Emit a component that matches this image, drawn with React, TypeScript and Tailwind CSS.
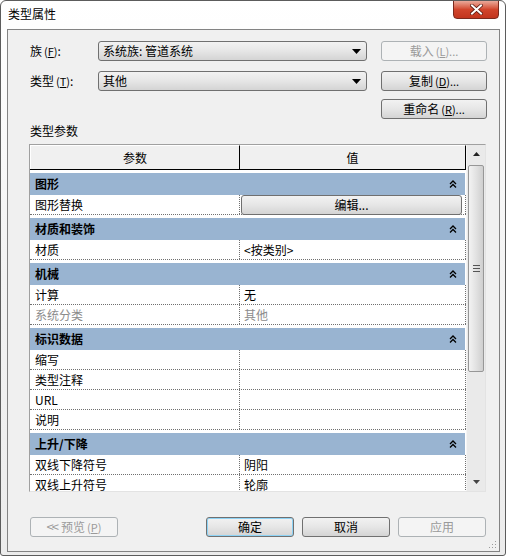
import React from 'react';

interface Row {
  k: string;
  v?: string;
  button?: string;
  muted?: boolean;
}

interface Section {
  title: string;
  rows: Row[];
}

const sections: Section[] = [
  { title: '图形', rows: [{ k: '图形替换', button: '编辑...' }] },
  { title: '材质和装饰', rows: [{ k: '材质', v: '<按类别>' }] },
  {
    title: '机械',
    rows: [
      { k: '计算', v: '无' },
      { k: '系统分类', v: '其他', muted: true },
    ],
  },
  { title: '标识数据', rows: [{ k: '缩写' }, { k: '类型注释' }, { k: 'URL' }, { k: '说明' }] },
  {
    title: '上升/下降',
    rows: [
      { k: '双线下降符号', v: '阴阳' },
      { k: '双线上升符号', v: '轮廓' },
    ],
  },
];

const face =
  'h-[20px] flex items-center rounded-[3px] border border-[#707070] bg-gradient-to-b from-[#f2f2f2] via-[#e6e6e6] to-[#d4d4d4] text-black';
const btn = `${face} justify-center`;
const btnOff =
  'h-[20px] flex items-center justify-center rounded-[3px] border border-[#adb2b5] bg-[#f4f4f4] text-[#9a9a9a]';

const Chevrons = () => (
  <svg width="8" height="8" viewBox="0 0 8 8" className="block">
    <path d="M1 4 L4 1 L7 4" fill="none" stroke="#000" strokeWidth="1.3" />
    <path d="M1 7.5 L4 4.5 L7 7.5" fill="none" stroke="#000" strokeWidth="1.3" />
  </svg>
);

const ComboArrow = () => (
  <svg width="9" height="5" viewBox="0 0 9 5" className="block">
    <path d="M0 0 H9 L4.5 5 Z" fill="#000" />
  </svg>
);

const Combo = ({ text }: { text: string }) => (
  <div className={`${face} w-[269px] justify-between pl-[4px] pr-[5px]`}>
    <span className="leading-[14px]">{text}</span>
    <ComboArrow />
  </div>
);

const Key = ({ label, k }: { label: string; k: string }) => (
  <span>
    {label}
    <span className="text-[11px] ml-[2px]">
      (<span className="underline">{k}</span>)
    </span>
  </span>
);

export default function App() {
  return (
    <div className="w-[506px] h-[556px] flex flex-col overflow-hidden rounded-t-[6px] rounded-b-[3px] border border-[#5c5c5c] bg-gradient-to-b from-[#ffffff] via-[#f3f3f3] to-[#ececec] text-[12px] text-black font-['Noto_Sans_CJK_SC','Liberation_Sans',sans-serif]">
      {/* title bar */}
      <div className="h-[28px] flex items-start justify-between">
        <div className="pl-[7px] pt-[5px] leading-[16px]">类型属性</div>
        <div className="mr-[6px] w-[46px] h-[19px] -mt-px flex items-center justify-center rounded-b-[4px] border border-[#7a2a1e] bg-gradient-to-b from-[#e9a99a] via-[#d1452c] to-[#c2351e]">
          <svg width="13" height="11" viewBox="0 0 13 11">
            <path d="M2 1.5 L11 9.5 M11 1.5 L2 9.5" stroke="#5a1a10" strokeWidth="3.6" strokeLinecap="square" />
            <path d="M2 1.5 L11 9.5 M11 1.5 L2 9.5" stroke="#fff" strokeWidth="2" strokeLinecap="square" />
          </svg>
        </div>
      </div>

      {/* client area */}
      <div className="relative flex-1 ml-[6px] mr-[5px] mb-[3px] border border-[#838383] bg-[#f0f0f0] flex flex-col">
        <div className="flex items-center mt-[11px] pl-[22px] pr-[12px]">
          <div className="w-[68px]">
            <Key label="族" k="F" />:
          </div>
          <Combo text="系统族: 管道系统" />
          <div className={`${btnOff} w-[106px] ml-auto`}>
            <span>载入</span>
            <span className="text-[11px] ml-[2px]">
              (<span className="underline">L</span>)...
            </span>
          </div>
        </div>
        <div className="flex items-center mt-[10px] pl-[22px] pr-[12px]">
          <div className="w-[68px]">
            <Key label="类型" k="T" />:
          </div>
          <Combo text="其他" />
          <div className={`${btn} w-[106px] ml-auto`}>
            <span>复制</span>
            <span className="text-[11px] ml-[2px]">
              (<span className="underline">D</span>)...
            </span>
          </div>
        </div>
        <div className="flex mt-[8px] pr-[12px]">
          <div className={`${btn} w-[106px] ml-auto`}>
            <span>重命名</span>
            <span className="text-[11px] ml-[2px]">
              (<span className="underline">R</span>)...
            </span>
          </div>
        </div>

        <div className="h-[25px] pl-[22px] pt-[4px] leading-[16px]">类型参数</div>

        {/* property table */}
        <div className="ml-[21px] w-[457px] h-[348px] border border-t-[#a0a0a0] border-l-[#a0a0a0] border-r-[#e3e3e3] border-b-[#e3e3e3] flex bg-white">
          <div className="w-[436px] flex flex-col">
            <div className="h-[25px] flex bg-[#f0f0f0] border-b border-black">
              <div className="w-[210px] flex items-center justify-center border-r border-black border-t border-l border-t-white border-l-white">
                参数
              </div>
              <div className="flex-1 flex items-center justify-center border-r border-black border-t border-t-white">
                值
              </div>
            </div>
            <div className="flex-1 overflow-hidden">
              {sections.map((s) => (
                <div key={s.title} className="pt-[3px]">
                  <div className="h-[22px] flex items-center justify-between bg-[#99b4d1] pl-[5px] pr-[8px] mr-px">
                    <span className="font-bold leading-[14px]">{s.title}</span>
                    <Chevrons />
                  </div>
                  {s.rows.map((r) => (
                    <div
                      key={r.k}
                      className={`h-[20px] flex border-b border-dotted border-[#707070] ${r.muted ? 'text-[#8c8c8c]' : ''}`}
                    >
                      <div className="w-[210px] flex items-center pl-[5px] border-r border-dotted border-[#707070]">
                        {r.k}
                      </div>
                      <div className="flex-1 flex items-center pl-[4px] border-r border-dotted border-[#707070]">
                        {r.button ? (
                          <div className={`${btn} w-full h-[17px] -ml-[3px] mr-px border-[#8a8a8a]`}>{r.button}</div>
                        ) : (
                          r.v
                        )}
                      </div>
                    </div>
                  ))}
                </div>
              ))}
            </div>
          </div>

          {/* scrollbar */}
          <div className="flex-1 flex flex-col bg-[#eaeaea] border-l border-[#f5f5f5]">
            <div className="h-[18px] flex items-center justify-center">
              <svg width="7" height="4" viewBox="0 0 7 4">
                <path d="M0 4 L3.5 0 L7 4 Z" fill="#222" />
              </svg>
            </div>
            <div className="mx-[1px] mt-[2px] h-[207px] rounded-[2px] border border-[#979797] bg-gradient-to-r from-[#f3f3f3] via-[#e2e2e2] to-[#cfcfcf] flex items-center justify-center">
              <svg width="7" height="7" viewBox="0 0 7 7">
                <path d="M0 0.5 H7 M0 3.5 H7 M0 6.5 H7" stroke="#555" strokeWidth="1" />
              </svg>
            </div>
            <div className="flex-1" />
            <div className="h-[18px] flex items-center justify-center">
              <svg width="7" height="4" viewBox="0 0 7 4">
                <path d="M0 0 L3.5 4 L7 0 Z" fill="#444" />
              </svg>
            </div>
          </div>
        </div>

        {/* footer buttons */}
        <div className="flex mt-[25px] pl-[22px]">
          <div className={`${btnOff} w-[88px]`}>
            <span className="text-[13px] mr-[4px] tracking-[-2px]">&lt;&lt;</span>
            <span>预览</span>
            <span className="text-[11px] ml-[2px]">
              (<span className="underline">P</span>)
            </span>
          </div>
          <div className={`${btn} w-[88px] ml-[88px] border-[#3c7fb1] shadow-[inset_0_0_0_1px_#8ed3f5]`}>确定</div>
          <div className={`${btn} w-[88px] ml-[8px]`}>取消</div>
          <div className={`${btnOff} w-[88px] ml-[8px]`}>应用</div>
        </div>

        <svg width="8" height="8" viewBox="0 0 8 8" className="absolute right-[2px] bottom-[2px]">
          <g fill="#9a9a9a">
            <rect x="6" y="0" width="1" height="1" />
            <rect x="3" y="3" width="1" height="1" />
            <rect x="6" y="3" width="1" height="1" />
            <rect x="0" y="6" width="1" height="1" />
            <rect x="3" y="6" width="1" height="1" />
            <rect x="6" y="6" width="1" height="1" />
          </g>
        </svg>
      </div>
    </div>
  );
}
